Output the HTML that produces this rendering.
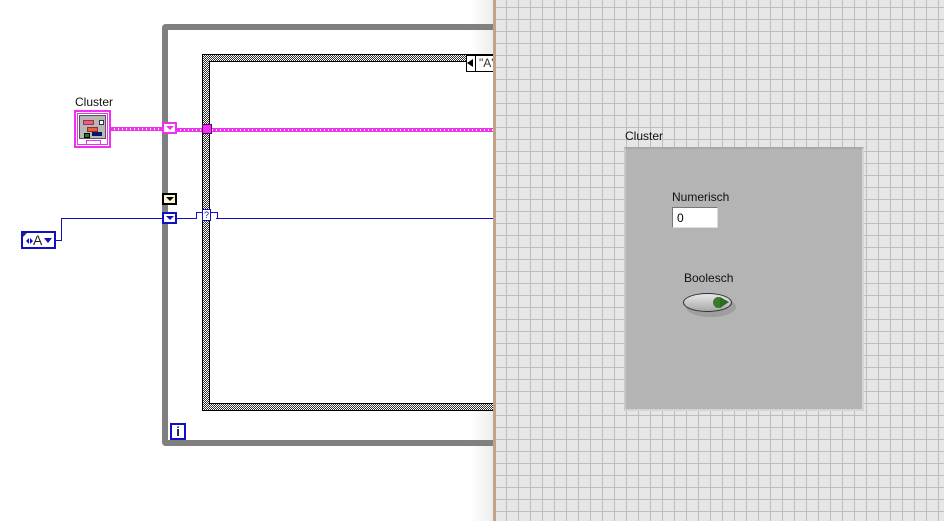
<!DOCTYPE html>
<html><head><meta charset="utf-8"><style>
body{margin:0;width:944px;height:521px;overflow:hidden;position:relative;background:#fff;font-family:"Liberation Sans",sans-serif;}
.a{position:absolute}
.chk{background-color:#fff;background-image:repeating-conic-gradient(#333 0 25%,#fff 0 50%);background-size:2px 2px;}
.fp{left:496px;top:0;width:448px;height:521px;background-color:#e6e6e6;
background-image:linear-gradient(to right,#bdbdbd 1px,transparent 1px),linear-gradient(to bottom,#bdbdbd 1px,transparent 1px);
background-size:12px 12px;background-position:10px 7px;}
.lbl{font-size:12px;color:#111}
.pw{background:repeating-linear-gradient(to right,#f030f0 0 3px,#fff 3px 4px);border-top:1px solid #f030f0;border-bottom:1px solid #f030f0;box-sizing:border-box}
</style></head><body>
<div class="a" style="left:470px;top:0;width:24px;height:521px;background:linear-gradient(to right,rgba(240,240,240,0),#ececec)"></div>
<!-- while loop -->
<div class="a" style="left:162px;top:24px;width:340px;height:422px;border:6px solid #808080;border-right:none;border-radius:4px 0 0 4px;box-sizing:border-box"></div>
<!-- case structure -->
<div class="a chk" style="left:202px;top:54px;width:300px;height:357px;border:1px solid #000;border-right:none;box-sizing:border-box"></div>
<div class="a" style="left:209px;top:61px;width:293px;height:343px;background:#fff;border:1px solid #000;border-right:none;box-sizing:border-box"></div>
<!-- selector -->
<div class="a" style="left:466px;top:55px;width:8px;height:15px;border:1px solid #000;background:#fff"></div>
<div class="a" style="left:467px;top:59px;width:0;height:0;border-top:4px solid transparent;border-bottom:4px solid transparent;border-right:6px solid #000"></div>
<div class="a" style="left:475px;top:55px;width:30px;height:15px;border:1px solid #000;background:#fff;font-size:12px;line-height:15px;padding-left:3px;color:#333">"A"</div>
<!-- i terminal -->
<div class="a" style="left:170px;top:423px;width:12px;height:13px;border:2px solid #1010c0;font-size:13px;font-weight:bold;line-height:13px;text-align:center;color:#0a0a60">i</div>
<!-- Cluster constant -->
<div class="a lbl" style="left:75px;top:95px">Cluster</div>
<div class="a" style="left:74px;top:110px;width:37px;height:38px;border:2px solid #f030f0;box-sizing:border-box;background:#fff"></div>
<div class="a" style="left:77px;top:113px;width:31px;height:32px;border:1px solid #f030f0;box-sizing:border-box"></div>
<div class="a" style="left:79px;top:115px;width:27px;height:24px;background:#b8b8b8;border:1px solid #555;box-sizing:border-box"></div>
<div class="a" style="left:83px;top:120px;width:9px;height:3px;background:#e86080;border:1px solid #a03050"></div>
<div class="a" style="left:87px;top:127px;width:9px;height:3px;background:#e06040;border:1px solid #903020"></div>
<div class="a" style="left:84px;top:133px;width:4px;height:3px;background:#208020;border:1px solid #000"></div>
<div class="a" style="left:92px;top:132px;width:10px;height:4px;background:#101070"></div>
<div class="a" style="left:99px;top:120px;width:3px;height:3px;background:#fff;border:1px solid #333"></div>
<div class="a" style="left:86px;top:140px;width:13px;height:4px;border:1px solid #f030f0;border-bottom:none"></div>
<!-- pink wire -->
<div class="a pw" style="left:111px;top:127px;width:52px;height:4px"></div>
<div class="a pw" style="left:177px;top:128px;width:326px;height:4px"></div>
<div class="a" style="left:162px;top:122px;width:15px;height:12px;border:2px solid #f030f0;background:#fff;box-sizing:border-box"></div>
<div class="a" style="left:166px;top:126px;border-left:4px solid transparent;border-right:4px solid transparent;border-top:4px solid #f030f0"></div>
<div class="a" style="left:202px;top:124px;width:8px;height:8px;background:#f030f0;border:1px solid #600060"></div>
<!-- black tunnel -->
<div class="a" style="left:162px;top:193px;width:15px;height:12px;border:2px solid #000;background:#fff8d0;box-sizing:border-box"></div>
<div class="a" style="left:166px;top:197px;border-left:4px solid transparent;border-right:4px solid transparent;border-top:4px solid #000"></div>
<!-- blue wire -->
<div class="a" style="left:56px;top:240px;width:6px;height:1px;background:#1010c0"></div>
<div class="a" style="left:61px;top:218px;width:1px;height:23px;background:#1010c0"></div>
<div class="a" style="left:62px;top:218px;width:101px;height:1px;background:#1010c0"></div>
<div class="a" style="left:177px;top:218px;width:20px;height:1px;background:#1010c0"></div>
<div class="a" style="left:196px;top:212px;width:20px;height:6px;border-top:1px solid #1010c0;border-left:1px solid #1010c0;border-right:1px solid #1010c0"></div>
<div class="a" style="left:216px;top:218px;width:287px;height:1px;background:#1010c0"></div>
<div class="a" style="left:202px;top:209px;width:7px;height:10px;border:1px solid #1010c0;background:#fff;font-size:9px;line-height:10px;color:#1010c0;text-align:center">?</div>
<div class="a" style="left:162px;top:212px;width:15px;height:12px;border:2px solid #1010c0;background:#fff;box-sizing:border-box"></div>
<div class="a" style="left:166px;top:216px;border-left:4px solid transparent;border-right:4px solid transparent;border-top:4px solid #1010c0"></div>
<div class="a" style="left:21px;top:231px;width:35px;height:18px;border:2px solid #1010c0;background:#fff;box-sizing:border-box"></div>
<div class="a" style="left:26px;top:238px;border-top:3px solid transparent;border-bottom:3px solid transparent;border-right:3px solid #1010c0"></div>
<div class="a" style="left:30px;top:238px;border-top:3px solid transparent;border-bottom:3px solid transparent;border-left:3px solid #1010c0"></div>
<div class="a" style="left:33px;top:232px;font-size:14px;line-height:16px;color:#222">A</div>
<div class="a" style="left:44px;top:238px;border-left:4px solid transparent;border-right:4px solid transparent;border-top:5px solid #1010c0"></div>
<div class="a" style="left:23px;top:233px;border-top:4px solid #333;border-right:4px solid transparent"></div>
<div class="a" style="left:493px;top:0;width:3px;height:521px;background:#c0a488"></div>
<!-- front panel -->
<div class="a fp"></div>
<div class="a lbl" style="left:625px;top:129px">Cluster</div>
<div class="a" style="left:624px;top:147px;width:240px;height:264px;background:#b4b4b4;border:2px solid #d4d4d4;border-top-color:#a8a8a8;border-left-color:#c8c8c8;box-sizing:border-box"></div>
<div class="a lbl" style="left:672px;top:190px">Numerisch</div>
<div class="a" style="left:672px;top:207px;width:46px;height:21px;background:#fff;border:1px solid #777;border-right-color:#ddd;border-bottom-color:#ddd;box-sizing:border-box;font-size:12px;padding:3px 0 0 4px">0</div>
<div class="a lbl" style="left:684px;top:271px">Boolesch</div>
<div class="a" style="left:686px;top:297px;width:50px;height:20px;border-radius:50%;background:#888;opacity:.5"></div>
<div class="a" style="left:683px;top:293px;width:49px;height:19px;border-radius:50%;background:linear-gradient(#e8e8e8,#a8a8a8);border:1px solid #333;box-sizing:border-box"></div>
<div class="a" style="left:713px;top:297px;width:11px;height:11px;border-radius:50%;background:#3a7a2a"></div>
<div class="a" style="left:720px;top:297px;border-top:5px solid transparent;border-bottom:6px solid transparent;border-left:9px solid #2d6a20"></div>
</body></html>
